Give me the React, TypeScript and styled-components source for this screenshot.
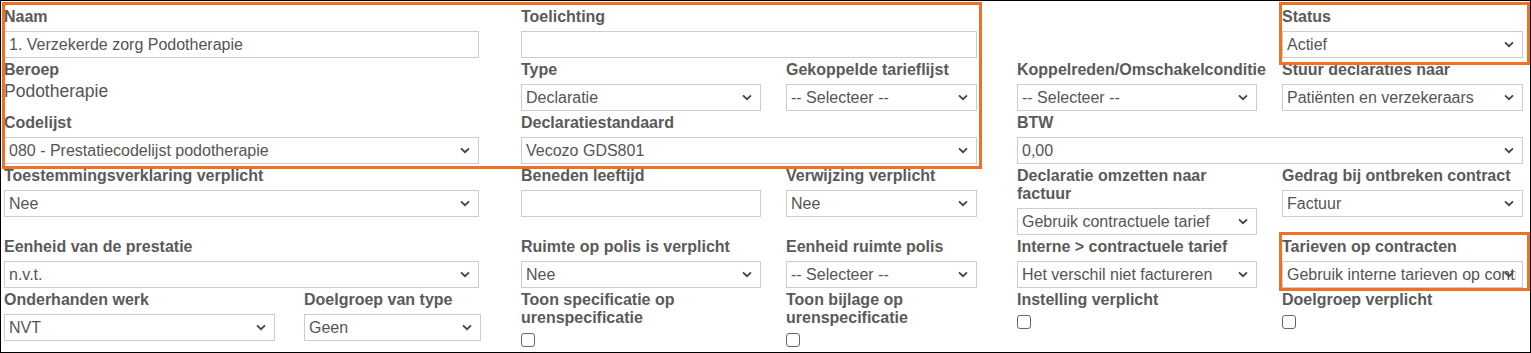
import React from 'react';
import styled, { createGlobalStyle } from 'styled-components';

const GlobalStyle = createGlobalStyle`
	html, body {
		margin: 0;
		padding: 0;
		background: #fff;
	}
	body {
		font-family: "Liberation Sans", Arial, sans-serif;
		color: #555;
	}
`;

const Frame = styled.div`
	position: relative;
	box-sizing: border-box;
	width: 1531px;
	height: 353px;
	border: 1px solid #000;
	padding: 7px 0 0 3px;
	overflow: hidden;
	background: #fff;
`;

// gutters are explicit tracks: 475 | 42 | 240 | 25 | 191 | 40 | 240 | 25 | 241
const FormGrid = styled.div`
	display: grid;
	grid-template-columns: 475px 42px 240px 25px 191px 40px 240px 25px 241px;
	align-items: start;
`;

const Field = styled.div<{ $col: string; $width?: number }>`
	grid-column: ${(p) => p.$col};
	display: flex;
	flex-direction: column;
	margin-bottom: 3px;
	min-width: 0;
	${(p) => (p.$width ? `width: ${p.$width}px; flex: 0 0 ${p.$width}px;` : '')}
`;

const SubRow = styled.div`
	grid-column: 1 / 2;
	display: flex;
	gap: 29px;
`;

const Label = styled.label`
	font-size: 16px;
	font-weight: bold;
	line-height: 18px;
	color: #5a5a5a;
	margin-bottom: 5px;
`;

const TextInput = styled.input`
	box-sizing: border-box;
	width: 100%;
	height: 27px;
	border: 1px solid #ccc;
	padding: 0 4px;
	font-family: "Liberation Sans", Arial, sans-serif;
	font-size: 16px;
	color: #555;
	outline: none;
	background: #fff;
`;

const StaticValue = styled.div`
	font-size: 17.5px;
	line-height: 20px;
	color: #555;
	margin-top: -3px;
`;

const SelectWrap = styled.div`
	position: relative;
	width: 100%;
	height: 27px;
	svg {
		position: absolute;
		right: 9px;
		top: 10px;
		pointer-events: none;
	}
`;

const NativeSelect = styled.select`
	box-sizing: border-box;
	appearance: none;
	-webkit-appearance: none;
	width: 100%;
	height: 27px;
	border: 1px solid #ccc;
	border-radius: 0;
	padding: 0 6px 0 4px;
	font-family: "Liberation Sans", Arial, sans-serif;
	font-size: 16px;
	color: #555;
	background: #fff;
	outline: none;
`;

const Check = styled.input`
	appearance: none;
	-webkit-appearance: none;
	box-sizing: border-box;
	width: 14px;
	height: 14px;
	margin: 1px 0 0 0;
	border: 1px solid #666;
	border-radius: 3px;
	background: #fff;
`;

const Highlight = styled.div<{ $x: number; $y: number; $w: number; $h: number }>`
	position: absolute;
	left: ${(p) => p.$x}px;
	top: ${(p) => p.$y}px;
	width: ${(p) => p.$w}px;
	height: ${(p) => p.$h}px;
	box-sizing: border-box;
	border: 3px solid #f07024;
	pointer-events: none;
`;

const Chevron = () => (
	<svg width="10" height="7" viewBox="0 0 10 7">
		<path d="M1 1.3 L5 5.2 L9 1.3" fill="none" stroke="#444" strokeWidth="1.8" />
	</svg>
);

const Select = ({ value }: { value: string }) => (
	<SelectWrap>
		<NativeSelect defaultValue={value}>
			<option>{value}</option>
		</NativeSelect>
		<Chevron />
	</SelectWrap>
);

const App = () => {
	return (
		<>
			<GlobalStyle />
			<Frame>
				<FormGrid>
					<Field $col="1 / 2">
						<Label>Naam</Label>
						<TextInput defaultValue="1. Verzekerde zorg Podotherapie" />
					</Field>
					<Field $col="3 / 6">
						<Label>Toelichting</Label>
						<TextInput defaultValue="" />
					</Field>
					<Field $col="9 / 10">
						<Label>Status</Label>
						<Select value="Actief" />
					</Field>

					<Field $col="1 / 2">
						<Label>Beroep</Label>
						<StaticValue>Podotherapie</StaticValue>
					</Field>
					<Field $col="3 / 4">
						<Label>Type</Label>
						<Select value="Declaratie" />
					</Field>
					<Field $col="5 / 6">
						<Label>Gekoppelde tarieflijst</Label>
						<Select value="-- Selecteer --" />
					</Field>
					<Field $col="7 / 8">
						<Label>Koppelreden/Omschakelconditie</Label>
						<Select value="-- Selecteer --" />
					</Field>
					<Field $col="9 / 10">
						<Label>Stuur declaraties naar</Label>
						<Select value="Patiënten en verzekeraars" />
					</Field>

					<Field $col="1 / 2">
						<Label>Codelijst</Label>
						<Select value="080 - Prestatiecodelijst podotherapie" />
					</Field>
					<Field $col="3 / 6">
						<Label>Declaratiestandaard</Label>
						<Select value="Vecozo GDS801" />
					</Field>
					<Field $col="7 / 10">
						<Label>BTW</Label>
						<Select value="0,00" />
					</Field>

					<Field $col="1 / 2">
						<Label>Toestemmingsverklaring verplicht</Label>
						<Select value="Nee" />
					</Field>
					<Field $col="3 / 4">
						<Label>Beneden leeftijd</Label>
						<TextInput defaultValue="" />
					</Field>
					<Field $col="5 / 6">
						<Label>Verwijzing verplicht</Label>
						<Select value="Nee" />
					</Field>
					<Field $col="7 / 8">
						<Label>Declaratie omzetten naar factuur</Label>
						<Select value="Gebruik contractuele tarief" />
					</Field>
					<Field $col="9 / 10">
						<Label>Gedrag bij ontbreken contract</Label>
						<Select value="Factuur" />
					</Field>

					<Field $col="1 / 2">
						<Label>Eenheid van de prestatie</Label>
						<Select value="n.v.t." />
					</Field>
					<Field $col="3 / 4">
						<Label>Ruimte op polis is verplicht</Label>
						<Select value="Nee" />
					</Field>
					<Field $col="5 / 6">
						<Label>Eenheid ruimte polis</Label>
						<Select value="-- Selecteer --" />
					</Field>
					<Field $col="7 / 8">
						<Label>Interne &gt; contractuele tarief</Label>
						<Select value="Het verschil niet factureren" />
					</Field>
					<Field $col="9 / 10">
						<Label>Tarieven op contracten</Label>
						<Select value="Gebruik interne tarieven op contracten" />
					</Field>

					<SubRow>
						<Field $col="auto" $width={271}>
							<Label>Onderhanden werk</Label>
							<Select value="NVT" />
						</Field>
						<Field $col="auto" $width={177}>
							<Label>Doelgroep van type</Label>
							<Select value="Geen" />
						</Field>
					</SubRow>
					<Field $col="3 / 4">
						<Label>Toon specificatie op urenspecificatie</Label>
						<Check type="checkbox" />
					</Field>
					<Field $col="5 / 6">
						<Label>Toon bijlage op urenspecificatie</Label>
						<Check type="checkbox" />
					</Field>
					<Field $col="7 / 8">
						<Label>Instelling verplicht</Label>
						<Check type="checkbox" />
					</Field>
					<Field $col="9 / 10">
						<Label>Doelgroep verplicht</Label>
						<Check type="checkbox" />
					</Field>
				</FormGrid>

				<Highlight $x={1} $y={1} $w={980} $h={167} />
				<Highlight $x={1278} $y={1} $w={251} $h={63} />
				<Highlight $x={1278} $y={231} $w={251} $h={59} />
			</Frame>
		</>
	);
};

export default App;
